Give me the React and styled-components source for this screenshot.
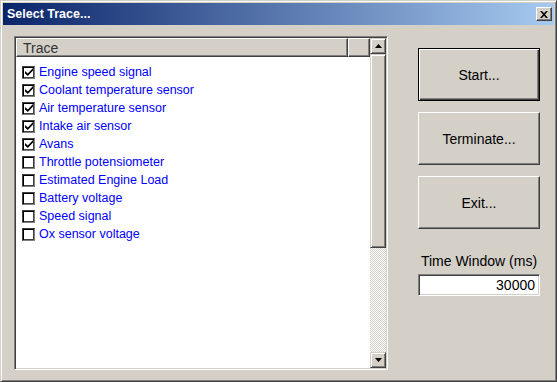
import React from 'react';
import styled, { createGlobalStyle } from 'styled-components';

const Global = createGlobalStyle`
  html, body { margin: 0; padding: 0; background: #d4d0c8; }
  body { font-family: "Liberation Sans", Arial, sans-serif; }
  * { box-sizing: border-box; }
`;

const Window = styled.div`
  width: 557px;
  height: 382px;
  background: #d4d0c8;
  border-top: 1px solid #d4d0c8;
  border-left: 1px solid #d4d0c8;
  border-right: 1px solid #404040;
  border-bottom: 1px solid #404040;
  box-shadow: inset 1px 1px #ffffff, inset -1px -1px #808080;
  padding: 2px;
  display: flex;
  flex-direction: column;
`;

const TitleBar = styled.div`
  height: 22px;
  flex: none;
  display: flex;
  align-items: center;
  justify-content: space-between;
  padding: 0 2px 0 4px;
  background: linear-gradient(to right, #0a246a, #a6caf0);
`;

const Title = styled.span`
  color: #fff;
  font-weight: bold;
  font-size: 12.5px;
`;

const CloseButton = styled.div`
  width: 16px;
  height: 14px;
  background: #d4d0c8;
  border-top: 1px solid #fff;
  border-left: 1px solid #fff;
  border-right: 1px solid #404040;
  border-bottom: 1px solid #404040;
  box-shadow: inset -1px -1px #808080;
  display: flex;
  align-items: center;
  justify-content: center;
`;

const Body = styled.div`
  flex: 1;
  display: flex;
  padding: 11px 0 0 11px;
`;

const ListBox = styled.div`
  width: 374px;
  height: 334px;
  border-top: 1px solid #808080;
  border-left: 1px solid #808080;
  border-right: 1px solid #fff;
  border-bottom: 1px solid #fff;
  box-shadow: inset 1px 1px #404040, inset -1px -1px #d4d0c8;
  padding: 1px;
  display: flex;
`;

const ListMain = styled.div`
  flex: 1;
  display: flex;
  flex-direction: column;
  background: #fff;
`;

const Header = styled.div`
  height: 19px;
  display: flex;
  flex: none;
`;

const HeaderCell = styled.div`
  width: ${(p) => p.$w}px;
  height: 19px;
  background: #d4d0c8;
  border-top: 1px solid #fff;
  border-left: 1px solid #fff;
  border-right: 1px solid #404040;
  border-bottom: 1px solid #404040;
  box-shadow: inset -1px -1px #808080;
  font-size: 14px;
  color: #333;
  padding-left: 6px;
  line-height: 19px;
`;

const Rows = styled.div`
  padding: 6px 0 0 6px;
  display: flex;
  flex-direction: column;
`;

const Row = styled.div`
  height: 18px;
  display: flex;
  align-items: center;
  gap: 4px;
  font-size: 12.5px;
  color: #0000ff;
`;

const Box = styled.div`
  width: 13px;
  height: 13px;
  background: #fff;
  border: 1px solid #404040;
  border-right-color: #808080;
  border-bottom-color: #808080;
  box-shadow: inset 1px 1px #000, inset -1px -1px #404040;
  display: flex;
  align-items: center;
  justify-content: center;
  flex: none;
`;

const ScrollBar = styled.div`
  width: 16px;
  display: flex;
  flex-direction: column;
`;

const ScrollButton = styled.div`
  width: 16px;
  height: 16px;
  flex: none;
  background: #d4d0c8;
  border-top: 1px solid #d4d0c8;
  border-left: 1px solid #d4d0c8;
  border-right: 1px solid #404040;
  border-bottom: 1px solid #404040;
  box-shadow: inset 1px 1px #fff, inset -1px -1px #808080;
  display: flex;
  align-items: center;
  justify-content: center;
`;

const Thumb = styled(ScrollButton)`
  height: 194px;
`;

const Track = styled.div`
  flex: 1;
  background-color: #d4d0c8;
  background-image: conic-gradient(#ffffff 25%, #d4d0c8 0 50%, #ffffff 0 75%, #d4d0c8 0);
  background-size: 2px 2px;
`;

const Side = styled.div`
  width: 122px;
  margin-left: 30px;
  padding-top: 12px;
  display: flex;
  flex-direction: column;
`;

const Button = styled.div`
  height: 53px;
  margin-bottom: 11px;
  background: #d4d0c8;
  display: flex;
  align-items: center;
  justify-content: center;
  font-size: 14px;
  color: #000;
  border: 1px solid ${(p) => (p.$default ? '#000' : '#d4d0c8')};
  box-shadow: ${(p) =>
    p.$default
      ? 'inset 1px 1px #fff, inset -1px -1px #404040, inset -2px -2px #808080'
      : 'inset -1px -1px #808080'};
  ${(p) =>
    !p.$default &&
    `border-top-color:#fff;border-left-color:#fff;border-right-color:#404040;border-bottom-color:#404040;`}
`;

const Label = styled.div`
  margin-top: 13px;
  text-align: center;
  font-size: 14px;
  color: #000;
  line-height: 16px;
`;

const Input = styled.div`
  margin-top: 5px;
  height: 22px;
  background: #fff;
  border-top: 1px solid #808080;
  border-left: 1px solid #808080;
  border-right: 1px solid #fff;
  border-bottom: 1px solid #fff;
  box-shadow: inset 1px 1px #404040, inset -1px -1px #d4d0c8;
  font-size: 14px;
  text-align: right;
  padding-right: 4px;
  line-height: 20px;
  color: #000;
`;

const items = [
  ['Engine speed signal', true],
  ['Coolant temperature sensor', true],
  ['Air temperature sensor', true],
  ['Intake air sensor', true],
  ['Avans', true],
  ['Throttle potensiometer', false],
  ['Estimated Engine Load', false],
  ['Battery voltage', false],
  ['Speed signal', false],
  ['Ox sensor voltage', false],
];

const Check = () => (
  <svg width="8" height="8" viewBox="0 0 8 8">
    <path d="M0 3 L0 5.5 L2.8 8 L8 2.5 L8 0 L2.8 5.5 Z" fill="#000" />
  </svg>
);

const Arrow = ({ down }) => (
  <svg width="7" height="4" viewBox="0 0 7 4">
    <path d={down ? 'M0 0 H7 L3.5 4 Z' : 'M0 4 H7 L3.5 0 Z'} fill="#000" />
  </svg>
);

export default function App() {
  return (
    <>
      <Global />
      <Window>
        <TitleBar>
          <Title>Select Trace...</Title>
          <CloseButton>
            <svg width="8" height="7" viewBox="0 0 8 7">
              <path d="M0 0 L2 0 L4 2.3 L6 0 L8 0 L5 3.5 L8 7 L6 7 L4 4.7 L2 7 L0 7 L3 3.5 Z" fill="#000" />
            </svg>
          </CloseButton>
        </TitleBar>
        <Body>
          <ListBox>
            <ListMain>
              <Header>
                <HeaderCell $w={332}>Trace</HeaderCell>
                <HeaderCell $w={22} />
              </Header>
              <Rows>
                {items.map(([label, on]) => (
                  <Row key={label}>
                    <Box>{on && <Check />}</Box>
                    {label}
                  </Row>
                ))}
              </Rows>
            </ListMain>
            <ScrollBar>
              <ScrollButton>
                <Arrow />
              </ScrollButton>
              <Thumb />
              <Track />
              <ScrollButton>
                <Arrow down />
              </ScrollButton>
            </ScrollBar>
          </ListBox>
          <Side>
            <Button $default>Start...</Button>
            <Button>Terminate...</Button>
            <Button>Exit...</Button>
            <Label>Time Window (ms)</Label>
            <Input>30000</Input>
          </Side>
        </Body>
      </Window>
    </>
  );
}
